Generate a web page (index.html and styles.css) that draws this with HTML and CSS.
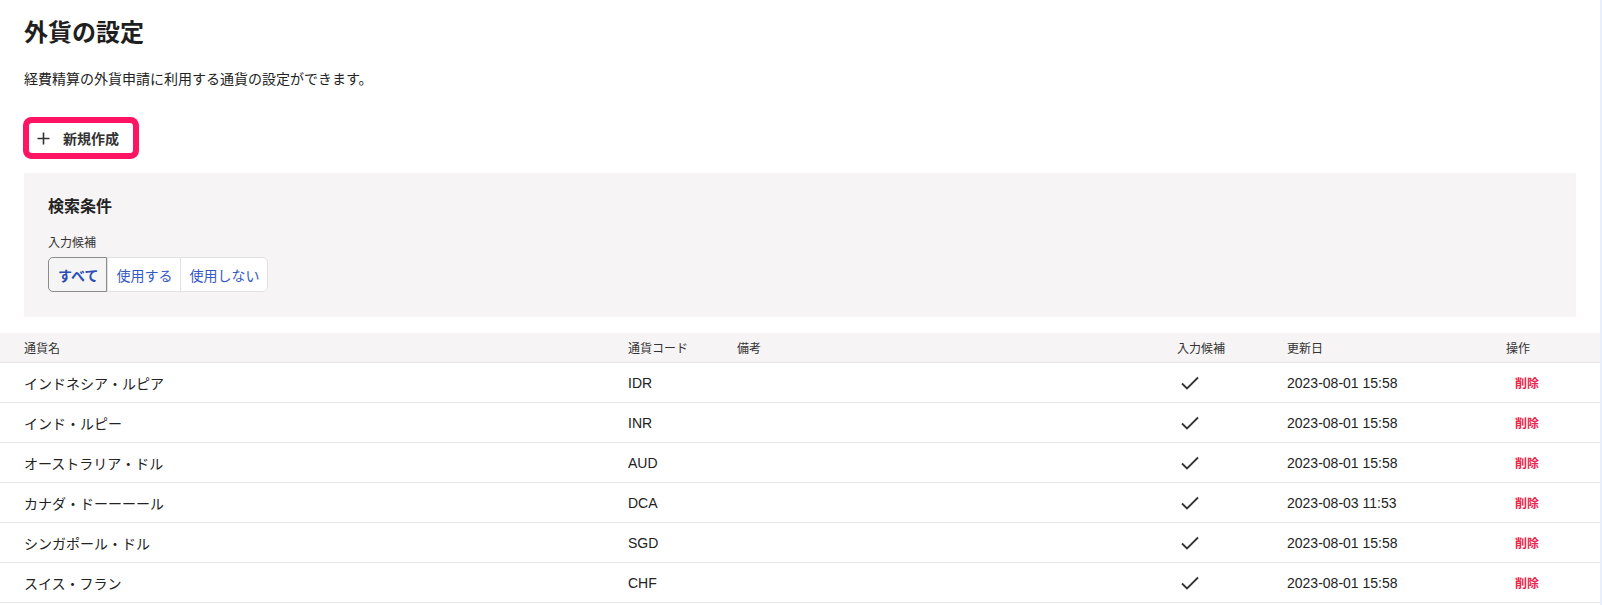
FILE: index.html
```html
<!DOCTYPE html>
<html lang="ja">

<head>
    <meta charset="utf-8">
    <meta name="viewport" content="width=device-width,initial-scale=1.0">
    <title>外貨の設定</title>
    <link rel="stylesheet" href="styles.css">
</head>

<body>
    <div class="page">
        <header class="head">
            <h1 class="title">外貨の設定</h1>
            <p class="lead">経費精算の外貨申請に利用する通貨の設定ができます。</p>
            <button class="newBtn">
                <svg class="plus" width="13" height="13" viewBox="0 0 13 13"><path d="M6.5 0.5v12M0.5 6.5h12" stroke="#333" stroke-width="1.6" fill="none"/></svg>
                <span>新規作成</span>
            </button>
        </header>

        <section class="search">
            <h2 class="searchTitle">検索条件</h2>
            <div class="fieldLabel">入力候補</div>
            <div class="segments">
                <button class="seg active">すべて</button>
                <button class="seg">使用する</button>
                <button class="seg">使用しない</button>
            </div>
        </section>

        <div class="table">
            <div class="row headRow">
                <div>通貨名</div>
                <div>通貨コード</div>
                <div>備考</div>
                <div>入力候補</div>
                <div>更新日</div>
                <div>操作</div>
            </div>
            <div class="row">
                <div>インドネシア・ルピア</div>
                <div>IDR</div>
                <div></div>
                <div class="check"><svg width="18" height="14" viewBox="0 0 18 14"><path d="M1 7.5l5 5L17 1.5" stroke="#333" stroke-width="1.8" fill="none"/></svg></div>
                <div>2023-08-01 15:58</div>
                <div><a class="del" href="#">削除</a></div>
            </div>
            <div class="row">
                <div>インド・ルピー</div>
                <div>INR</div>
                <div></div>
                <div class="check"><svg width="18" height="14" viewBox="0 0 18 14"><path d="M1 7.5l5 5L17 1.5" stroke="#333" stroke-width="1.8" fill="none"/></svg></div>
                <div>2023-08-01 15:58</div>
                <div><a class="del" href="#">削除</a></div>
            </div>
            <div class="row">
                <div>オーストラリア・ドル</div>
                <div>AUD</div>
                <div></div>
                <div class="check"><svg width="18" height="14" viewBox="0 0 18 14"><path d="M1 7.5l5 5L17 1.5" stroke="#333" stroke-width="1.8" fill="none"/></svg></div>
                <div>2023-08-01 15:58</div>
                <div><a class="del" href="#">削除</a></div>
            </div>
            <div class="row">
                <div>カナダ・ドーーーール</div>
                <div>DCA</div>
                <div></div>
                <div class="check"><svg width="18" height="14" viewBox="0 0 18 14"><path d="M1 7.5l5 5L17 1.5" stroke="#333" stroke-width="1.8" fill="none"/></svg></div>
                <div>2023-08-03 11:53</div>
                <div><a class="del" href="#">削除</a></div>
            </div>
            <div class="row">
                <div>シンガポール・ドル</div>
                <div>SGD</div>
                <div></div>
                <div class="check"><svg width="18" height="14" viewBox="0 0 18 14"><path d="M1 7.5l5 5L17 1.5" stroke="#333" stroke-width="1.8" fill="none"/></svg></div>
                <div>2023-08-01 15:58</div>
                <div><a class="del" href="#">削除</a></div>
            </div>
            <div class="row">
                <div>スイス・フラン</div>
                <div>CHF</div>
                <div></div>
                <div class="check"><svg width="18" height="14" viewBox="0 0 18 14"><path d="M1 7.5l5 5L17 1.5" stroke="#333" stroke-width="1.8" fill="none"/></svg></div>
                <div>2023-08-01 15:58</div>
                <div><a class="del" href="#">削除</a></div>
            </div>
        </div>
    </div>
</body>

</html>
```

FILE: styles.css
```css
html {
    background: #e9f0fb;
}

body {
    margin: 0;
    font-family: "Liberation Sans", "Noto Sans CJK JP", sans-serif;
    color: #222;
}

.page {
    width: 1600px;
    min-height: 100vh;
    background: #fff;
}

.head {
    padding: 17px 24px 0;
}

.title {
    margin: 0;
    font-size: 24px;
    line-height: 32px;
    font-weight: bold;
    color: #1f1f1f;
}

.lead {
    margin: 20px 0 0;
    font-size: 14px;
    line-height: 20px;
}

.newBtn {
    margin: 34px 0 0 5px;
    height: 30px;
    padding: 0 14px 0 8px;
    display: flex;
    align-items: center;
    gap: 13px;
    border: none;
    border-radius: 3px;
    background: #fff;
    box-shadow: 0 0 0 6px #ff1463;
    font-family: inherit;
    font-size: 14px;
    font-weight: bold;
    color: #333;
    cursor: pointer;
}

.search {
    margin: 20px 24px 0;
    padding: 22px 24px 25px;
    background: #f6f4f4;
}

.searchTitle {
    margin: 0;
    font-size: 16px;
    line-height: 24px;
    font-weight: bold;
}

.fieldLabel {
    margin-top: 16px;
    font-size: 12px;
    line-height: 16px;
    color: #333;
}

.segments {
    margin-top: 6px;
    display: inline-flex;
    height: 35px;
    border: 1px solid #e2e2e2;
    border-radius: 5px;
    background: #fff;
    box-sizing: border-box;
}

.seg {
    padding: 0 8px;
    border: none;
    border-left: 1px solid #e2e2e2;
    background: transparent;
    font-family: inherit;
    font-size: 14px;
    color: #3559c4;
    cursor: pointer;
}

.seg:first-child {
    border-left: none;
}

.seg.active {
    margin: -1px 0 -1px -1px;
    padding: 0 8px 0 9px;
    border: 1px solid #8c8c8c;
    border-radius: 5px 0 0 5px;
    background: #f5f5f6;
    font-weight: 600;
    color: #2b4db5;
}

.table {
    margin-top: 16px;
}

.row {
    display: grid;
    grid-template-columns: 604px 109px 440px 110px 219px 94px;
    padding-left: 24px;
    height: 40px;
    box-sizing: border-box;
    align-items: center;
    border-bottom: 1px solid #e4e4e4;
    font-size: 14px;
}

.headRow {
    height: 30px;
    background: #f6f4f4;
    font-size: 12px;
    color: #333;
}

.check {
    padding-left: 4px;
    display: flex;
}

.del {
    margin-left: 9px;
    font-size: 12px;
    font-weight: bold;
    color: #e8244a;
    text-decoration: none;
}
```
